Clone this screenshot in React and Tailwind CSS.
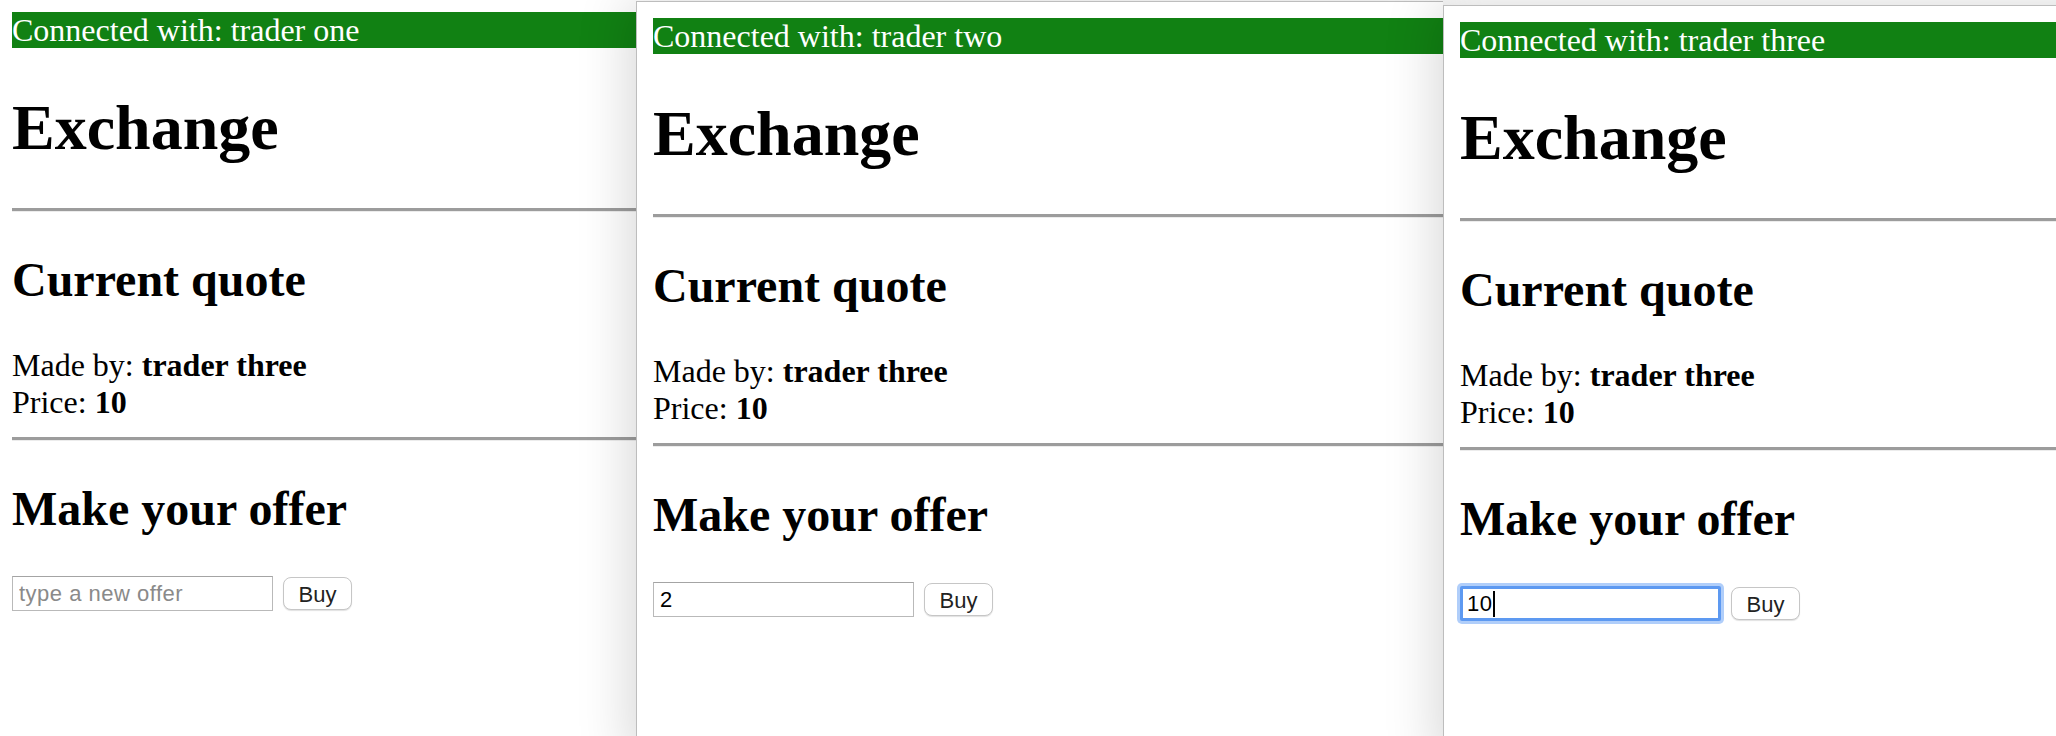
import React from "react";

const serif = "font-['Liberation_Serif','Times_New_Roman',serif]";
const sans = "font-['Liberation_Sans',Arial,sans-serif]";

function Rule() {
  return <div className="h-[4px] border-t-[3px] border-b border-t-[#9c9c9c] border-b-[#ececec]" />;
}

function OfferInput({ value, placeholder, focused }) {
  if (focused) {
    return (
      <div
        className={`flex items-center w-[261px] h-[35px] px-[4px] border-[3px] border-[#5d99f1] rounded-[2px] bg-white shadow-[0_0_0_3px_rgba(150,190,248,0.75)] text-[22px] tracking-[0.5px] text-black ${sans}`}
      >
        <span>{value}</span>
        <span className="ml-[1px] inline-block w-[2px] h-[26px] bg-black" />
      </div>
    );
  }
  return (
    <input
      type="text"
      readOnly
      value={value}
      placeholder={placeholder}
      className={`w-[261px] h-[35px] px-[6px] border border-[#b9b9b9] border-t-[#a4a4a4] bg-white text-[22px] tracking-[0.5px] text-black placeholder:text-[#8a8a8a] outline-none ${sans}`}
    />
  );
}

// the right side of every window is hidden under the next one, so no right padding
function TraderWindow({ trader, value, placeholder, focused }) {
  return (
    <div className={`pl-[16px] pt-[16px] text-black ${serif}`}>
      <div className="bg-[#118113] text-white text-[32px] leading-[36px] whitespace-nowrap">
        Connected with: {trader}
      </div>

      <h1 className="mt-[43px] text-[64px] leading-[74px] font-bold">Exchange</h1>
      <div className="mt-[43px]">
        <Rule />
      </div>

      <h2 className="mt-[40px] text-[48px] leading-[55px] font-bold">Current quote</h2>
      <div className="mt-[40px] text-[32px] leading-[37px]">
        <div>
          Made by: <b>trader three</b>
        </div>
        <div>
          Price: <b>10</b>
        </div>
      </div>
      <div className="mt-[16px]">
        <Rule />
      </div>

      <h2 className="mt-[40px] text-[48px] leading-[55px] font-bold">Make your offer</h2>
      <div className="mt-[40px] flex items-center gap-[10px]">
        <OfferInput value={value} placeholder={placeholder} focused={focused} />
        <button
          type="button"
          className={`w-[69px] h-[33px] rounded-[8px] border border-[#c6c6c6] bg-white shadow-[0_1px_1px_rgba(0,0,0,0.12)] text-[22px] text-[#222] ${sans}`}
        >
          Buy
        </button>
      </div>
    </div>
  );
}

export default function App() {
  return (
    <div className="relative w-[2056px] h-[736px] overflow-hidden bg-white">
      {/* first window, partly off screen */}
      <div className="absolute left-[-5px] top-[-5px] w-[760px] h-[760px] overflow-hidden bg-white border-l border-t border-[#bdbdbd]">
        <TraderWindow trader="trader one" value="" placeholder="type a new offer" />
      </div>

      <div className="absolute left-[636px] top-[1px] w-[807px] h-[760px] overflow-hidden bg-white border-l border-t border-[#bdbdbd] shadow-[-6px_0_50px_rgba(0,0,0,0.16)]">
        <TraderWindow trader="trader two" value="2" />
      </div>

      <div className="absolute left-[1443px] top-[5px] w-[760px] h-[760px] bg-white border-l border-t border-[#bdbdbd] shadow-[-6px_0_50px_rgba(0,0,0,0.16)]">
        <TraderWindow trader="trader three" value="10" focused />
      </div>
    </div>
  );
}
